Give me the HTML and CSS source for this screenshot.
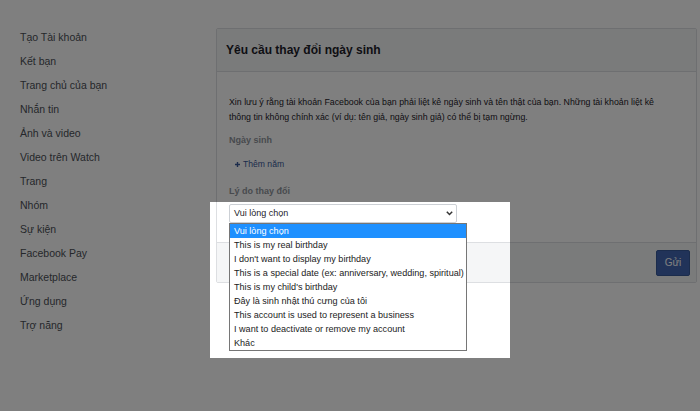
FILE: index.html
```html
<!DOCTYPE html>
<html lang="vi">
    <head>
        <meta charset="UTF-8">
        <title>Yêu cầu thay đổi ngày sinh</title>
<link rel="stylesheet" href="styles.css">
    </head>
    <body>
        <div class="page">
            <ul class="nav">
                <li>Tạo Tài khoản</li>
                <li>Kết bạn</li>
                <li>Trang chủ của bạn</li>
                <li>Nhắn tin</li>
                <li>Ảnh và video</li>
                <li>Video trên Watch</li>
                <li>Trang</li>
                <li>Nhóm</li>
                <li>Sự kiện</li>
                <li>Facebook Pay</li>
                <li>Marketplace</li>
                <li>Ứng dụng</li>
                <li>Trợ năng</li>
            </ul>

            <div class="card">
                <div class="card-head">Yêu cầu thay đổi ngày sinh</div>
                <div class="card-body">
                    <p class="note">Xin lưu ý rằng tài khoản Facebook của bạn phải liệt kê ngày sinh và tên thật của bạn. Những tài khoản liệt kê thông tin không chính xác (ví dụ: tên giả, ngày sinh giả) có thể bị tạm ngừng.</p>
                    <div class="label">Ngày sinh</div>
                    <a class="add-year" href="#">
                        <svg width="5" height="5" viewBox="0 0 5 5"><path d="M2.5 0v5M0 2.5h5" stroke="currentColor" stroke-width="1.4"/></svg>
                        Thêm năm
                    </a>
                    <div class="label label-reason">Lý do thay đổi</div>
                    <div class="picker">
                        <div class="select">
                            <span>Vui lòng chọn</span>
                            <svg width="7" height="5" viewBox="0 0 7 5"><path d="M0.8 0.8l2.7 2.7 2.7-2.7" fill="none" stroke="#333" stroke-width="1.5"/></svg>
                        </div>
                    </div>
                </div>
                <div class="card-foot">
                    <button class="send">Gửi</button>
                </div>
            </div>
        </div>

        <div class="dim"></div>

        <ul class="options">
            <li class="active">Vui lòng chọn</li>
            <li>This is my real birthday</li>
            <li>I don't want to display my birthday</li>
            <li>This is a special date (ex: anniversary, wedding, spiritual)</li>
            <li>This is my child's birthday</li>
            <li>Đây là sinh nhật thú cưng của tôi</li>
            <li>This account is used to represent a business</li>
            <li>I want to deactivate or remove my account</li>
            <li>Khác</li>
        </ul>
    </body>
</html>
```

FILE: styles.css
```css
html,body {
    margin: 0;
    background: #fff;
    font-family: "Liberation Sans", Arial, sans-serif;
    color: #1d2129;
}

.page {
    display: flex;
    align-items: flex-start;
}

.nav {
    list-style: none;
    margin: 0;
    padding: 25px 0 0 20px;
    width: 196px;
    font-size: 10.5px;
    line-height: 24px;
    color: #4b4f56;
}

.card {
    margin-top: 28px;
    width: 479px;
    border: 1px solid #dddfe2;
    border-radius: 2px;
}
.card-head {
    background: #f5f6f7;
    border-bottom: 1px solid #dddfe2;
    height: 42px;
    line-height: 42px;
    padding-left: 9px;
    font-size: 12px;
    font-weight: bold;
}
.card-body {
    padding: 23px 12px 19px;
    font-size: 9px;
    line-height: 15px;
}
.note {
    max-width: 444px;
    margin: 0 0 8px;
    font-size: 8.8px;
}
.label {
    font-weight: bold;
    color: #90949c;
}
.add-year {
    display: flex;
    align-items: center;
    gap: 3px;
    margin: 9px 0 0 6px;
    font-size: 8.6px;
    color: #385898;
    text-decoration: none;
}
.label-reason {
    margin-top: 12px;
}

.picker {
    margin-top: 5px;
    width: 228px;
}
.select {
    display: flex;
    justify-content: space-between;
    align-items: center;
    height: 17px;
    padding: 0 3px 0 4px;
    border: 1px solid #ccd0d5;
    border-radius: 2px;
    color: #1d2129;
}

.card-foot {
    display: flex;
    justify-content: flex-end;
    align-items: center;
    height: 39px;
    padding-right: 6px;
    background: #f5f6f7;
    border-top: 1px solid #dddfe2;
}
.send {
    width: 34px;
    height: 26px;
    padding: 0;
    background: #4267b2;
    border: 1px solid #365899;
    border-radius: 2px;
    color: #fff;
    font-family: inherit;
    font-size: 10px;
}

/* dim layer with a hole over the open dropdown */
.dim {
    position: fixed;
    inset: 0;
    background: rgba(0, 0, 0, 0.5);
    clip-path: polygon(0 0, 100% 0, 100% 100%, 0 100%, 0 0,
        210px 202px, 210px 358px, 510px 358px, 510px 202px, 210px 202px);
}

/* the open native list, drawn over everything */
.options {
    position: absolute;
    left: 229px;
    top: 223px;
    width: 236px;
    margin: 0;
    padding: 0;
    list-style: none;
    background: #fff;
    border: 1px solid #767676;
    font-size: 9.1px;
    line-height: 14px;
    color: #222;
}
.options li {
    padding-left: 4px;
    white-space: nowrap;
}
.options .active {
    background: #1e90ff;
    color: #fff;
}
```
